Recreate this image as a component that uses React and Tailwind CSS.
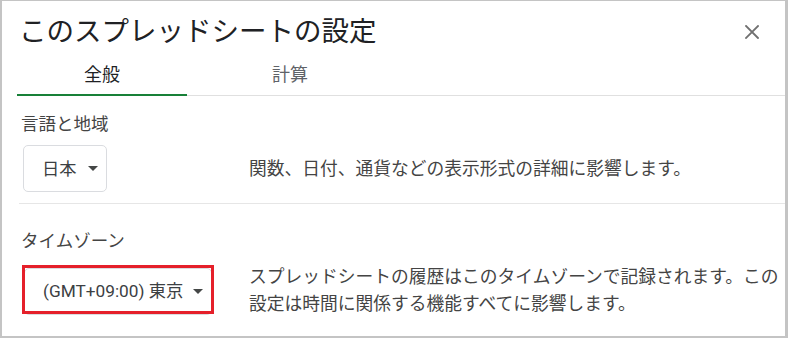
import React from 'react';

const font = { fontFamily: 'Roboto, "Noto Sans CJK JP", sans-serif' };

function Caret() {
  return (
    <svg width="10" height="5" viewBox="0 0 10 5" className="shrink-0">
      <path d="M0 0h10L5 5z" fill="#444746" />
    </svg>
  );
}

function CloseIcon() {
  return (
    <svg width="14" height="14" viewBox="0 0 14 14">
      <path d="M1 1l12 12M13 1L1 13" stroke="#707070" strokeWidth="1.8" strokeLinecap="square" />
    </svg>
  );
}

function Select({ label, highlight, width }) {
  return (
    <div className="relative">
      <div
        className={`flex items-center justify-between h-[47px] pl-[18px] pr-[8px] border border-[#dadce0] rounded-[5px] bg-white text-[17.25px] leading-[24px] text-[#3c4043] ${width}`}
      >
        <span className="whitespace-nowrap">{label}</span>
        <Caret />
      </div>
      {highlight && (
        <div className="absolute left-[-2px] right-[-2px] top-[-3px] bottom-[1px] border-[3px] border-[#e5202a]" />
      )}
    </div>
  );
}

export default function App() {
  return (
    <div
      className="w-[788px] h-[338px] bg-white border-t border-l-2 border-r-[3px] border-b-2 border-[#c4c4c4] overflow-hidden"
      style={font}
    >
      {/* header */}
      <div className="flex items-center justify-between pl-[17px] pr-[21px] pt-[13px]">
        <h1 className="text-[27.5px] leading-[36px] text-[#202124]">このスプレッドシートの設定</h1>
        <button className="flex items-center justify-center w-[24px] h-[24px]">
          <CloseIcon />
        </button>
      </div>

      {/* tabs */}
      <div className="flex ml-[15px] border-b border-[#e0e0e0]">
        <div className="w-[170px] pt-[13px] pb-[7px] text-center text-[18px] leading-[24px] text-[#202124] border-b-2 border-[#188038] -mb-px">
          全般
        </div>
        <div className="w-[206px] pt-[13px] pb-[7px] text-center text-[18px] leading-[24px] text-[#5f6368]">
          計算
        </div>
      </div>

      {/* language & region */}
      <div className="ml-[17px] pt-[16px] pb-[11px] border-b border-[#e6e6e6]">
        <div className="pl-[2px] text-[17.5px] leading-[24px] text-[#444]">言語と地域</div>
        <div className="flex items-center mt-[9px]">
          <div className="w-[230px] pl-[4px] flex">
            <Select label="日本" width="w-[84px]" />
          </div>
          <p className="text-[17.75px] leading-[26px] text-[#444]">
            関数、日付、通貨などの表示形式の詳細に影響します。
          </p>
        </div>
      </div>

      {/* time zone */}
      <div className="ml-[17px] pt-[25px]">
        <div className="pl-[2px] text-[17.5px] leading-[24px] text-[#444]">タイムゾーン</div>
        <div className="flex items-center mt-[11px]">
          <div className="w-[230px] pl-[5px] flex">
            <Select label="(GMT+09:00) 東京" width="w-[188px]" highlight />
          </div>
          <p className="w-[536px] text-[17.75px] leading-[27px] text-[#444]">
            スプレッドシートの履歴はこのタイムゾーンで記録されます。この設定は時間に関係する機能すべてに影響します。
          </p>
        </div>
      </div>
    </div>
  );
}
